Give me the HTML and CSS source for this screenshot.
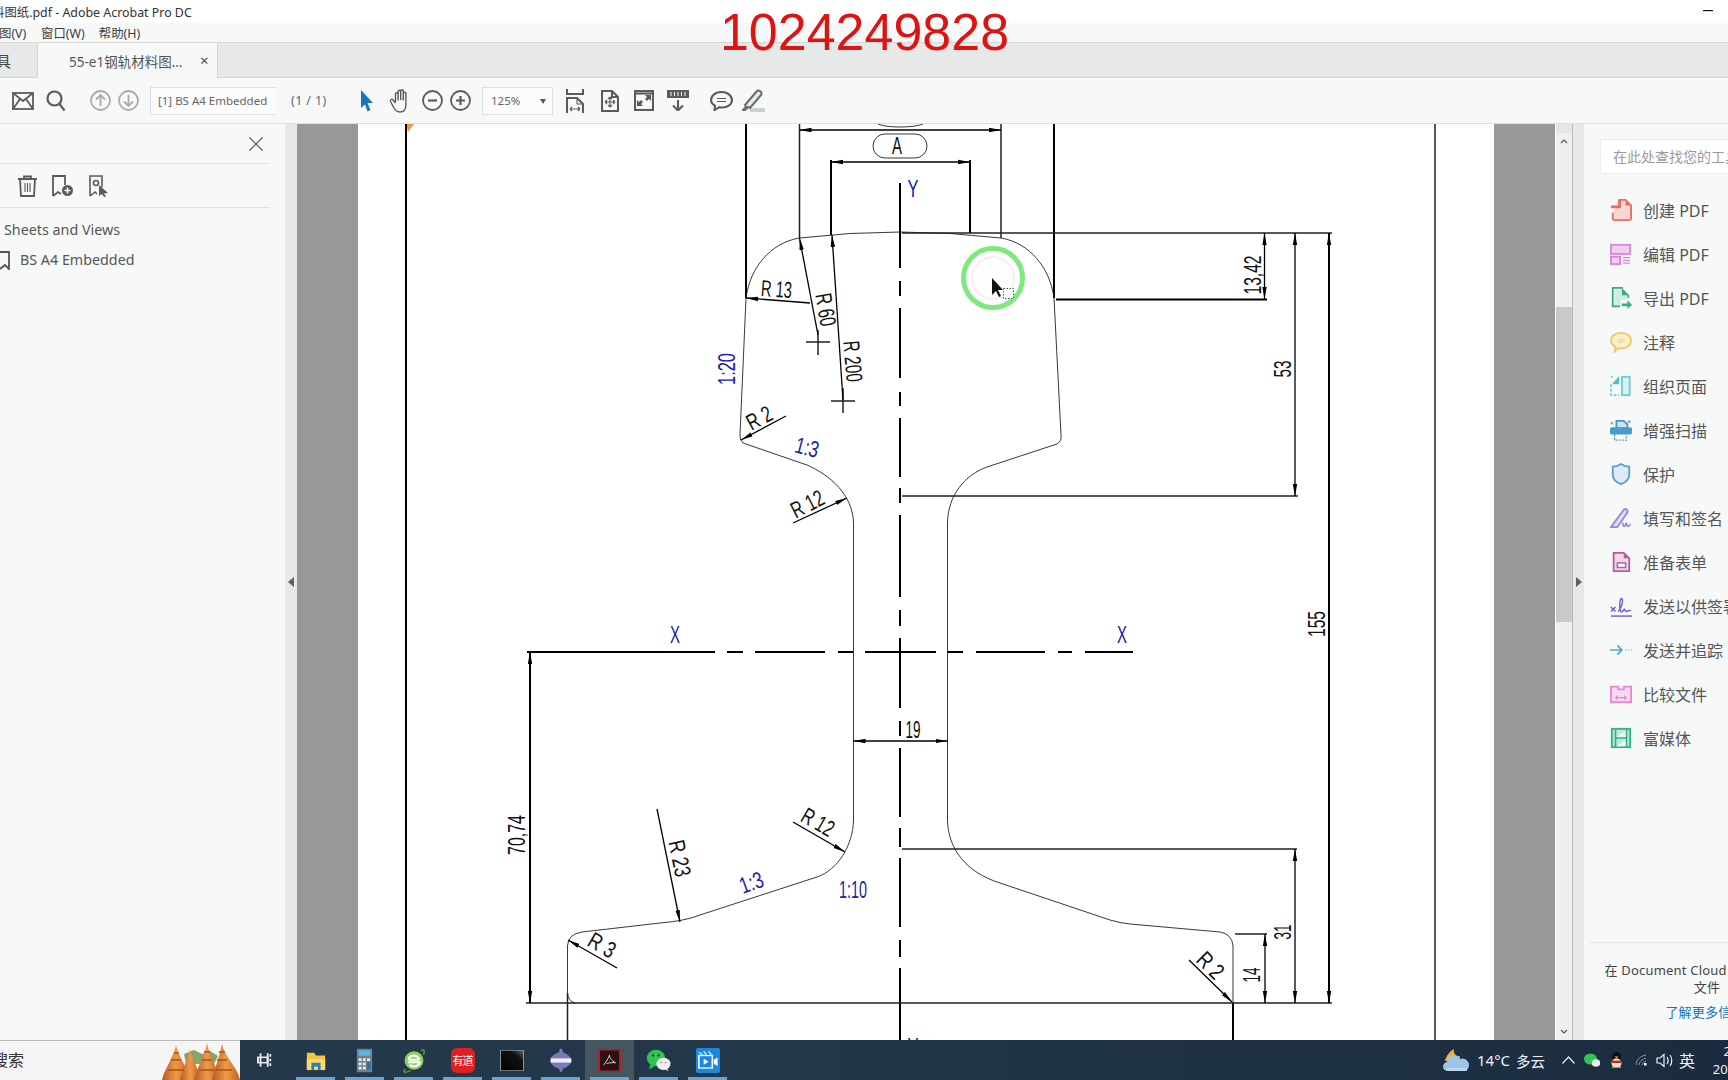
FILE: index.html
```html
<!DOCTYPE html>
<html lang="zh-CN">
<head>
<meta charset="utf-8">
<title>Adobe Acrobat Pro DC</title>
<link rel="stylesheet" href="styles.css">
</head>
<body>
<div class="app">
  <header class="titlebar">
    <span class="title-text">料图纸.pdf - Adobe Acrobat Pro DC</span>
    <svg class="win-min" width="10" height="2" viewBox="0 0 10 2"><rect width="10" height="1.2" fill="#111"/></svg>
    <div class="stamp">1024249828</div>
  </header>
  <nav class="menubar"><span class="menu-first">图(V)</span><span>窗口(W)</span><span>帮助(H)</span></nav>
  <div class="tabbar">
    <div class="tab-home"><span>具</span></div>
    <div class="tab-active"><span>55-e1钢轨材料图...</span><span class="tab-x">×</span></div>
  </div>
  <div class="toolbar">
    <svg class="ml12" width="22" height="18" viewBox="0 0 22 18"><g class="ic"><rect x="1" y="1" width="20" height="16"/><path d="M1 1l10 8 10-8M1 17l7-10M21 17l-7-10"/></g></svg>
    <svg class="ml12" width="20" height="22" viewBox="0 0 20 22"><g class="ic ic-b"><circle cx="8.5" cy="8.5" r="7"/><path d="M13.5 14l5 6.5"/></g></svg>
    <svg class="ml24" width="21" height="21" viewBox="0 0 21 21"><g class="ic ic-dis"><circle cx="10.5" cy="10.5" r="9.5"/><path d="M10.5 16V5M6 9.5l4.5-4.5 4.5 4.5"/></g></svg>
    <svg class="ml7" width="21" height="21" viewBox="0 0 21 21"><g class="ic ic-dis"><circle cx="10.5" cy="10.5" r="9.5"/><path d="M10.5 5v11M6 11.5l4.5 4.5 4.5-4.5"/></g></svg>
    <div class="page-field ml11">[1] BS A4 Embedded</div>
    <span class="page-count">(1 / 1)</span>
    <svg class="ml32" width="14" height="24" viewBox="0 0 14 24"><path d="M1 1l12 13-5.500 0 3 7-3 1.500-2.500-7L1 19z" fill="#1c75b9"/></svg>
    <svg class="ml15" width="23" height="25" viewBox="0 0 23 25"><g class="ic ic-h"><path d="M6.500 14V6a1.300 1.300 0 0 1 2.600 0v6.500M9.100 12V3.500a1.300 1.300 0 0 1 2.600 0V12M11.700 12V3a1.300 1.300 0 0 1 2.600 0v9.500M14.300 12.500V5.500a1.300 1.300 0 0 1 2.600 0V17c0 4.500-2.500 7-6 7-3.500 0-5-2-6.500-5L1.500 13.500c-.8-1.800 1.500-3 2.500-1.500l2.500 3"/></g></svg>
    <svg class="ml10" width="21" height="21" viewBox="0 0 21 21"><g class="ic"><circle cx="10.500" cy="10.500" r="9.500"/><path class="w2" d="M6 10.500h9"/></g></svg>
    <svg class="ml7" width="21" height="21" viewBox="0 0 21 21"><g class="ic"><circle cx="10.500" cy="10.500" r="9.500"/><path class="w2" d="M6 10.500h9M10.500 6v9"/></g></svg>
    <div class="zoom-box ml11"><span>125%</span><i class="caret"></i></div>
    <svg class="ml13" width="18" height="24" viewBox="0 0 18 24"><g class="ic ic-t"><path d="M1 0v5h16V0M1 24V9h10l6 6v9"/><path class="w1" d="M4 20h10M4 20l2-2M4 20l2 2M14 20l-2-2M14 20l-2 2M11 9v6h6"/></g></svg>
    <svg class="ml17" width="18" height="22" viewBox="0 0 18 22"><g class="ic ic-t"><path d="M1 1h10l6 6v14H1zM11 1v6h6"/><path class="w1" d="M9 7v10M4 12h10M9 7l-2 2M9 7l2 2M9 17l-2-2M9 17l2-2M4 12l2-2M4 12l2 2M14 12l-2-2M14 12l-2 2"/></g></svg>
    <svg class="ml15" width="20" height="21" viewBox="0 0 20 21"><g class="ic ic-t"><rect x="1" y="1" width="18" height="19"/><path d="M1 3.500h18"/></g><path d="M11 5h6v6l-2-2-2 2-2-2 2-2zM9 16H3v-6l2 2 2-2 2 2-2 2z" fill="#5a5c5a"/></svg>
    <svg class="ml13" width="22" height="21" viewBox="0 0 22 21"><rect width="22" height="8" fill="#5a5c5a"/><path d="M4 2v4M7.500 2v4M11 2v4M14.500 2v4M18 2v4" stroke="#f7f9f8"/><g class="ic ic-t"><path d="M11 10v10M6 15.500l5 5 5-5"/></g></svg>
    <svg class="ml21" width="23" height="20" viewBox="0 0 23 20"><g class="ic ic-t"><path d="M11.500 1c6 0 10.500 3.500 10.500 8s-4.500 7.500-9.500 7.500c-1 0-2 0-3-.3L4.500 19l.5-4.300C2.500 13.200 1 11.300 1 9c0-4.500 4.500-8 10.500-8z"/><path class="w1" d="M7 7.500h9M7 10.500h9"/></g></svg>
    <svg class="ml9" width="23" height="23" viewBox="0 0 23 23"><rect x="8" y="19" width="15" height="4" fill="#ccd0cc"/><path d="M1 21l3-3-1-2L15 2c2-2 6 2 4 4L8 19l-2-1-3 3z" fill="#e8eae8" stroke="#6a6c6a" stroke-width="2"/></svg>
  </div>

  <main class="workspace">
    <aside class="left-panel">
      <div class="left-head"><svg width="14" height="14" viewBox="0 0 14 14"><path d="M.5.5l13 13M13.500.5l-13 13" stroke="#555" stroke-width="1.200" fill="none"/></svg></div>
      <div class="left-tools">
        <svg width="21" height="22" viewBox="0 0 21 22"><g class="ic"><path d="M1 4h19M7 4V1.500h7V4M3 4l1 17h13l1-17"/><path class="w1" d="M8 8v9M10.500 8v9M13 8v9"/></g></svg>
        <svg width="23" height="22" viewBox="0 0 23 22"><g class="ic"><path d="M2 21V1h12v9M2 21l5-4 3 2"/></g><circle cx="16.500" cy="15.500" r="5.500" fill="#5a5c5a"/><path d="M13.500 15.500h6M16.500 12.500v6" stroke="#fff" stroke-width="1.500"/></svg>
        <svg width="21" height="22" viewBox="0 0 21 22"><g class="ic ic-n"><path d="M2 21V1h12v11M2 21l5-4 2 2"/><circle cx="8" cy="8" r="2.500"/></g><path d="M11 10l9 8-4 .500 2 3-2 .500-2-3-3 2z" fill="#5a5c5a"/></svg>
      </div>
      <div class="tree-row tree-a">Sheets and Views</div>
      <div class="tree-row tree-b"><svg width="10" height="19" viewBox="0 0 10 19"><path d="M0 1h9v17L5 14l-5 4" fill="none" stroke="#555" stroke-width="1.800"/></svg><span>BS A4 Embedded</span></div>
    </aside>
    <div class="splitter"><i class="tri-l"></i></div>

    <section class="viewer">
      <div class="page">
        <svg class="sheet" width="1136" height="916" viewBox="358 124 1136 916">
          <defs>
            <marker id="ar" markerUnits="userSpaceOnUse" markerWidth="13" markerHeight="7" refX="12" refY="3.500" orient="auto-start-reverse"><path d="M0 1.300L12 3.500 0 5.700z" fill="#000"/></marker>
          </defs>
          <path d="M406 124h8l-6 8z" fill="#f09a3c"/>
          <g class="thick">
            <path d="M406 124V1040M1329 233V1003M530 652V1003M746 124V298M1054 124V298M1056 299.500H1267M1233 1003V1040"/>
            <path d="M831 160V235M970 160V233"/>
            <path d="M900 183V268M900 281V296M900 308V378M900 392V406M900 418V477M900 488V503M900 515V597M900 610V626M900 638V708M900 721V736M900 748V817M900 828V847M900 858V927M900 940V957M900 968V1040"/>
            <path d="M527 652H715M727 652H743M755 652H825M838 652H853M865 652H936M947 652H963M976 652H1045M1058 652H1072M1085 652H1133"/>
          </g>
          <g class="mid">
            <path d="M902 233H1332M902 496H1298M902 849H1297M526 1003H1332M1235 934H1267"/>
          </g>
          <path class="thin" d="M799.500 238Q850 232 900 232Q950 232 1001 238C1030 243 1050 268 1054 298L1061 435Q1062 441 1057 444L987 467C965 475 948 495 947.500 523V820C948 848 965 872 1000 883L1110 920Q1120 923 1130 924L1220 932Q1232 934 1233 946V1003"/>
          <path class="thin" d="M799.500 238C770 243 750 268 746 298L740 435Q739.500 440 743 443L807 465C830 475 853 495 853.500 523V820C853 845 838 870 817 877L700 915Q685 921 660 923L582 932Q568 934 567.500 946V993Q568 1001 575 1003"/>
          <path class="mid" d="M567.500 993V1040M799.500 124V238M1001 124V238M1435 124V1040M818 330V355M806 342H830M843 388V413M831 401H855"/>
          <rect class="thin" x="873" y="134" width="54" height="24" rx="12"/>
          <path class="thin" d="M878 124Q885 127 900 127Q915 127 923 124"/>
          <g class="leader">
            <line x1="799.500" y1="130" x2="1001" y2="130" marker-start="url(#ar)" marker-end="url(#ar)"/>
            <line x1="831" y1="162" x2="970" y2="162" marker-start="url(#ar)" marker-end="url(#ar)"/>
            <line x1="853.500" y1="741" x2="947.500" y2="741" marker-start="url(#ar)" marker-end="url(#ar)"/>
            <line x1="1264.500" y1="233" x2="1264.500" y2="299" marker-start="url(#ar)" marker-end="url(#ar)"/>
            <line x1="1295" y1="233" x2="1295" y2="496" marker-start="url(#ar)" marker-end="url(#ar)"/>
            <line x1="1329" y1="233" x2="1329" y2="1003" marker-start="url(#ar)" marker-end="url(#ar)"/>
            <line x1="530" y1="652" x2="530" y2="1003" marker-start="url(#ar)" marker-end="url(#ar)"/>
            <line x1="1295" y1="849" x2="1295" y2="1003" marker-start="url(#ar)" marker-end="url(#ar)"/>
            <line x1="1265" y1="934" x2="1265" y2="1003" marker-start="url(#ar)" marker-end="url(#ar)"/>
            <line x1="810" y1="303" x2="746" y2="298" marker-end="url(#ar)"/>
            <line x1="818" y1="335" x2="799.500" y2="238" marker-end="url(#ar)"/>
            <line x1="843" y1="400" x2="832" y2="235" marker-end="url(#ar)"/>
            <line x1="786" y1="416" x2="741" y2="440" marker-end="url(#ar)"/>
            <line x1="793" y1="523" x2="847" y2="498" marker-end="url(#ar)"/>
            <line x1="657" y1="809" x2="680" y2="922" marker-end="url(#ar)"/>
            <line x1="793" y1="822" x2="845" y2="852" marker-end="url(#ar)"/>
            <line x1="617" y1="968" x2="568" y2="940" marker-end="url(#ar)"/>
            <line x1="1189" y1="960" x2="1232" y2="1002" marker-end="url(#ar)"/>
          </g>
          <g class="cad">
            <text transform="translate(897 154)" textLength="10" lengthAdjust="spacingAndGlyphs">A</text>
            <text transform="translate(913 738)" textLength="15" lengthAdjust="spacingAndGlyphs">19</text>
            <text transform="translate(1261 275) rotate(-90)" textLength="39" lengthAdjust="spacingAndGlyphs">13,42</text>
            <text transform="translate(1291 369) rotate(-90)" textLength="17" lengthAdjust="spacingAndGlyphs">53</text>
            <text transform="translate(1325 624) rotate(-90)" textLength="26" lengthAdjust="spacingAndGlyphs">155</text>
            <text transform="translate(1291 932) rotate(-90)" textLength="15" lengthAdjust="spacingAndGlyphs">31</text>
            <text transform="translate(1260 975) rotate(-90)" textLength="15" lengthAdjust="spacingAndGlyphs">14</text>
            <text transform="translate(525 835) rotate(-90)" textLength="40" lengthAdjust="spacingAndGlyphs">70,74</text>
            <text transform="translate(776 297) rotate(4)" textLength="31" lengthAdjust="spacingAndGlyphs">R 13</text>
            <text transform="translate(818 311) rotate(80)" textLength="33" lengthAdjust="spacingAndGlyphs">R 60</text>
            <text transform="translate(845 362) rotate(85)" textLength="41" lengthAdjust="spacingAndGlyphs">R 200</text>
            <text transform="translate(763 425) rotate(-28)" textLength="26" lengthAdjust="spacingAndGlyphs">R 2</text>
            <text transform="translate(811 511) rotate(-27)" textLength="34" lengthAdjust="spacingAndGlyphs">R 12</text>
            <text transform="translate(672 860) rotate(78)" textLength="37" lengthAdjust="spacingAndGlyphs">R 23</text>
            <text transform="translate(814 829) rotate(30)" textLength="34" lengthAdjust="spacingAndGlyphs">R 12</text>
            <text transform="translate(598 952) rotate(30)" textLength="28" lengthAdjust="spacingAndGlyphs">R 3</text>
            <text transform="translate(1205 971) rotate(45)" textLength="28" lengthAdjust="spacingAndGlyphs">R 2</text>
          </g>
          <g class="cad cad-blue">
            <text transform="translate(913 197)" textLength="11" lengthAdjust="spacingAndGlyphs">Y</text>
            <text transform="translate(675 643)" textLength="10" lengthAdjust="spacingAndGlyphs">X</text>
            <text transform="translate(1122 643)" textLength="10" lengthAdjust="spacingAndGlyphs">X</text>
            <text transform="translate(735 369) rotate(-90)" textLength="32" lengthAdjust="spacingAndGlyphs">1:20</text>
            <text transform="translate(805 455) rotate(15)" textLength="24" lengthAdjust="spacingAndGlyphs">1:3</text>
            <text transform="translate(754 890) rotate(-20)" textLength="24" lengthAdjust="spacingAndGlyphs">1:3</text>
            <text transform="translate(853 898)" textLength="28" lengthAdjust="spacingAndGlyphs">1:10</text>
            <text transform="translate(913 1055)" textLength="11" lengthAdjust="spacingAndGlyphs">Y</text>
          </g>
          <circle class="spot-in" cx="993" cy="278" r="21"/>
          <circle class="spot" cx="993" cy="278" r="29.500"/>
          <path d="M992 277l0 17 4-4 3 6 2-1-3-6 5 0z" fill="#111" transform="translate(0 1)"/>
          <rect class="drag" x="1003.500" y="288.500" width="10" height="10"/>
        </svg>
      </div>
    </section>

    <div class="scrollbar">
      <div class="sb-cap"></div>
      <div class="sb-track sb-top"><svg width="8" height="5" viewBox="0 0 8 5"><path d="M1 4l3-3 3 3" class="chev"/></svg></div>
      <div class="sb-thumb"></div>
      <div class="sb-track sb-bot"><svg width="8" height="5" viewBox="0 0 8 5"><path d="M1 1l3 3 3-3" class="chev"/></svg></div>
    </div>
    <div class="splitter splitter-r"><i class="tri-r"></i></div>

    <aside class="right-panel">
      <div class="right-inner">
        <div class="search-box">在此处查找您的工具</div>
        <ul class="tool-list">
          <li><svg viewBox="0 0 24 24"><path d="M9 1h8l6 6v14a2 2 0 0 1-2 2H5a2 2 0 0 1-2-2v-6" fill="#f6d7d3" stroke="#e2705f" stroke-width="2"/><path d="M9 1h3v9H1V7h8zM17 1v6h6" fill="#e2705f"/></svg><span>创建 PDF</span></li>
          <li><svg viewBox="0 0 24 24"><rect x="1" y="2" width="21" height="10" fill="#f3cdf0" stroke="#d58ad4" stroke-width="2"/><rect x="1" y="15" width="10" height="8" fill="#f3cdf0" stroke="#d58ad4" stroke-width="2"/><path d="M14 16h8M14 19h8M14 22h8" stroke="#d58ad4" stroke-width="1.500"/></svg><span>编辑 PDF</span></li>
          <li><svg viewBox="0 0 24 24"><path d="M14 1H3v20h8" fill="none" stroke="#3aa88a" stroke-width="2"/><path d="M5 3h8l6 6v5H12v6H5z" fill="#cfeee3"/><path d="M13 1l8 8v3h-2V9h-6z" fill="#3aa88a"/><path d="M13 18h6v-3.500l5 5-5 4.500v-3h-6z" fill="#3aa88a"/></svg><span>导出 PDF</span></li>
          <li><svg viewBox="0 0 24 24"><path d="M12 2c6 0 11 3.500 11 8.500S18 19 12 19c-1 0-2 0-3-.3L5 22.500l1-5.500C3 15.500 1 13.300 1 10.500 1 5.500 6 2 12 2z" fill="#fbeec8" stroke="#f0c96a" stroke-width="2"/><path d="M8 9.500h8M8 12h6" stroke="#f0d98e" stroke-width="1.500"/></svg><span>注释</span></li>
          <li><svg viewBox="0 0 24 24"><rect x="13" y="2" width="8.500" height="20" fill="#d5f1f4" stroke="#6fcbd6" stroke-width="2"/><path d="M1 10v12h9M1 2h2" fill="none" stroke="#6fcbd6" stroke-width="2" stroke-dasharray="3 2"/><path d="M10 1v9H2z" fill="#4fbecb"/></svg><span>组织页面</span></li>
          <li><svg viewBox="0 0 24 24"><path d="M7 9V2h8l4 4v4H7z" fill="#cfe3f2" stroke="#4c9ac9" stroke-width="2"/><rect x="0" y="9" width="24" height="8" rx="2" fill="#4c9ac9"/><path d="M5 17v6h13v-6" fill="none" stroke="#4c9ac9" stroke-width="1.500" stroke-dasharray="2 1.500"/><path d="M21 1v4M19 3h4M2 3v3M.5 4.500h3" stroke="#4c9ac9"/></svg><span>增强扫描</span></li>
          <li><svg viewBox="0 0 24 24"><path d="M12 1c3 2 6 3 9 3v9c0 5-4 8-9 10C7 21 3 18 3 13V4c3 0 6-1 9-3z" fill="#dceaf4" stroke="#5a9fcc" stroke-width="2"/></svg><span>保护</span></li>
          <li><svg viewBox="0 0 24 24"><path d="M1 22L15 3c2-2 5 0 4 3L8 22z" fill="#e2dbf7" stroke="#9a86dc" stroke-width="2"/><path d="M14 17c0 3 1 5 2 4s1-4 2-3 0 4 2 3 2-2 3-2" fill="none" stroke="#9a86dc" stroke-width="1.800"/></svg><span>填写和签名</span></li>
          <li><svg viewBox="0 0 24 24"><path d="M4 2h11l6 6v14H4z" fill="#f4d6ea" stroke="#b45da0" stroke-width="2"/><path d="M15 2v6h6z" fill="#b45da0"/><rect x="8" y="13" width="9" height="5" fill="#fff" stroke="#b45da0" stroke-width="1.600"/></svg><span>准备表单</span></li>
          <li><svg viewBox="0 0 24 24"><path d="M1 23h23" stroke="#8f80e0" stroke-width="2"/><path d="M1 13l5 5M6 13l-5 5" stroke="#6a5bd0" stroke-width="1.600"/><path d="M9 18c3-3 6-12 4-14s-3 8-2 12 3 2 4 0 1 2 3 2 2-2 5-1" fill="none" stroke="#6a5bd0" stroke-width="1.500"/></svg><span>发送以供签署</span></li>
          <li><svg viewBox="0 0 24 24"><path d="M0 12h13M8 7l5 5-5 5" fill="none" stroke="#50a8c8" stroke-width="1.800"/><path d="M17 12h8" stroke="#8fc4d8" stroke-width="1.500" stroke-dasharray="1.500 1.500"/></svg><span>发送并追踪</span></li>
          <li><svg viewBox="0 0 24 24"><path d="M1 4h8v3h6V4h8v17H1z" fill="#f9d9f0" stroke="#e58ad0" stroke-width="2"/><path d="M6 16h12M6 16l2.500-2M6 16l2.500 2M18 16l-2.500-2M18 16l-2.500 2" stroke="#e58ad0" stroke-width="1.500" fill="none"/></svg><span>比较文件</span></li>
          <li><svg viewBox="0 0 24 24"><rect x="2" y="2" width="20" height="20" fill="#bfe8d8" stroke="#35b08f" stroke-width="2"/><path d="M6 3v19M18 3v19M6 12h12" stroke="#35b08f" stroke-width="1.800"/><path d="M7 11l10-7v7zM7 21l10-7v7z" fill="#e9f7f1"/></svg><span>富媒体</span></li>
        </ul>
        <div class="cloud-note">
          <p>在 Document Cloud 中存储和共享</p>
          <p>文件</p>
          <a class="note-link">了解更多信息</a>
        </div>
      </div>
    </aside>
  </main>

  <footer class="taskbar">
    <div class="tb-search">
      <span>搜索</span>
      <svg class="tb-art" width="78" height="40" viewBox="0 0 78 40"><defs><linearGradient id="cone" x1="0" y1="0" x2="1" y2="0"><stop offset="0" stop-color="#b8591f"/><stop offset=".5" stop-color="#ee9a4a"/><stop offset="1" stop-color="#c4641f"/></linearGradient></defs><path d="M22 14l10-4 8 4 8-3 8 5-4 8H24z" fill="#8aa26a"/><path d="M14 5C12 16 2 30 0 40h28C26 28 16 16 14 5z" fill="url(#cone)"/><path d="M28 9C26 18 20 30 18 40h20C37 28 30 20 28 9z" fill="url(#cone)"/><path d="M45 3C43 16 34 30 32 40h26C56 28 47 16 45 3z" fill="url(#cone)"/><path d="M60 4C58 16 52 30 50 40h28C76 28 62 16 60 4z" fill="url(#cone)"/><path d="M9 20h10M12 13h5M40 20h10M42 12h6M55 20h10M57 12h6M6 30h16M37 30h16M54 30h16" stroke="#a9501a" stroke-width="1.500"/></svg>
    </div>
    <div class="tb-btn tb-view"><svg width="16" height="16" viewBox="0 0 18 24" preserveAspectRatio="none"><path d="M4 2v20M12 2v20M15 3v4M15 10v4M15 17v4" stroke="#e4e8ea" stroke-width="2"/><rect x="1" y="8" width="11" height="8" fill="none" stroke="#e4e8ea" stroke-width="2.400"/></svg></div>
    <div class="tb-btn tb-under tb-gap"><svg width="22" height="22" viewBox="0 0 24 24"><path d="M2 4h8l2 3h10v16H2z" fill="#f5c542"/><path d="M2 11h20v12H2z" fill="#fbd96a"/><path d="M7 23v-8h10v8h-3v-4h-4v4z" fill="#2a7fc0"/></svg></div>
    <div class="tb-btn tb-under"><svg width="17" height="25" viewBox="0 0 20 32" preserveAspectRatio="none"><rect x="1" y="1" width="18" height="30" fill="#6f7f8c"/><rect x="3" y="3" width="14" height="7" fill="#5ab5e0"/><path d="M3 13h3.500v3.500H3zM8 13h3.500v3.500H8zM13 13h3.500v3.500H13zM3 18.500h3.500V22H3zM8 18.500h3.500V22H8zM3 24h3.500v3.500H3zM8 24h3.500v3.500H8z" fill="#e4e8ea"/><rect x="13" y="18.500" width="4" height="9" fill="#2b6f9f"/></svg></div>
    <div class="tb-btn tb-under"><svg width="24" height="25" viewBox="0 0 28 30" preserveAspectRatio="none"><circle cx="14" cy="15" r="11" fill="#8fd060"/><path d="M8 14h12M8 14c0-6 10-7 12 0" fill="none" stroke="#fff" stroke-width="2.500"/><path d="M7 17h14c-1 5-9 7-12 3" fill="none" stroke="#fff" stroke-width="2.500"/><path d="M4 25C-1 30 5 30 10 27M22 3c4-2 5 0 3 5" fill="none" stroke="#5bb030" stroke-width="1.500"/></svg></div>
    <div class="tb-btn tb-under"><div class="yd">有道</div></div>
    <div class="tb-btn tb-under"><svg width="24" height="21" viewBox="0 0 24 29" preserveAspectRatio="none"><defs><linearGradient id="tg" x1="0" y1="1" x2="1" y2="0"><stop offset="0" stop-color="#000"/><stop offset=".7" stop-color="#111"/><stop offset="1" stop-color="#667"/></linearGradient></defs><rect x=".5" y=".5" width="23" height="28" fill="url(#tg)" stroke="#8a9498"/></svg></div>
    <div class="tb-btn tb-under"><svg width="22" height="25" viewBox="0 0 24 30" preserveAspectRatio="none"><path d="M10 5c0-6 4-6 4 0 8 3 10 9 10 10s-2 7-10 10c0 5-4 5-4 0C2 22 0 17 0 15S2 8 10 5z" fill="#7d78b8"/><rect x="1" y="12.500" width="22" height="5" fill="#f0f2f5"/></svg></div>
    <div class="tb-btn tb-under tb-active"><svg width="23" height="23" viewBox="0 0 23 30" preserveAspectRatio="none"><rect x="1" y="1" width="21" height="28" fill="#2a1214" stroke="#a8232a" stroke-width="2"/><path d="M11.500 8c-1 4-3 8-6 13M11.500 8c0 4 2 7 6 10-3-.5-6 0-9 1" fill="none" stroke="#f0e6e6" stroke-width="1"/></svg></div>
    <div class="tb-btn tb-under"><svg width="25" height="23" viewBox="0 0 30 28" preserveAspectRatio="none"><ellipse cx="12" cy="11" rx="11" ry="10" fill="#2fc552"/><path d="M5 19l-1 6 6-4z" fill="#2fc552"/><circle cx="8.500" cy="8" r="1.500" fill="#0f5a25"/><circle cx="15" cy="8" r="1.500" fill="#0f5a25"/><ellipse cx="21" cy="18" rx="8.500" ry="7.500" fill="#f0f0f0"/><path d="M25 23l2 4-5-3z" fill="#f0f0f0"/><circle cx="18.500" cy="16.500" r="1" fill="#888"/><circle cx="23.500" cy="16.500" r="1" fill="#888"/></svg></div>
    <div class="tb-btn tb-under"><svg width="24" height="25" viewBox="0 0 25 30" preserveAspectRatio="none"><rect width="25" height="30" rx="2" fill="#1c87e0"/><path d="M3 5l4 3M8 4l3 4M13 4l3 4" stroke="#cfe8fb" stroke-width="1.500"/><rect x="3" y="9" width="14" height="15" fill="none" stroke="#fff" stroke-width="1.600"/><path d="M8 13l5 3.500-5 3.500z" fill="#fff"/><path d="M18.500 14l4-2.500v10l-4-2.500z" fill="#fff"/></svg></div>

    <div class="tray">
      <svg width="26" height="24" viewBox="0 0 26 24"><path d="M11 1c-4 2-8 7-9 12h9c4 0 6-2 6-5-3 1-7-2-6-7z" fill="#f2b03a"/><path d="M5 23a4.500 4.500 0 0 1-1-9 7 7 0 0 1 13-3 6 6 0 0 1 5 12z" fill="#9cc4e8"/><path d="M3 20h21v2.500a1 1 0 0 1-1 .5H5z" fill="#bcd8f0"/></svg>
      <span class="t-temp">14°C</span>
      <span class="t-weather">多云</span>
      <svg class="t-up" width="13" height="8" viewBox="0 0 13 8"><path d="M.5 7.500l6-6.500 6 6.500" fill="none" stroke="#e6ebef" stroke-width="1.200"/></svg>
      <svg class="t-wx" width="16" height="14" viewBox="0 0 16 14"><ellipse cx="6.500" cy="6" rx="6.500" ry="5.500" fill="#2fc552"/><ellipse cx="12" cy="10" rx="4.200" ry="3.800" fill="#e8eaec"/></svg>
      <svg class="t-qq" width="13" height="16" viewBox="0 0 13 16"><ellipse cx="6.500" cy="5" rx="4.500" ry="5" fill="#111"/><ellipse cx="6.500" cy="11" rx="5" ry="4.500" fill="#f2f2f2"/><path d="M2 8.500h9v2.500H2z" fill="#d81e1e"/><path d="M4.500 4.500h4l-2 2z" fill="#f5b82e"/><path d="M2 15h3.500M7.500 15H11" stroke="#f5b82e" stroke-width="1.600"/></svg>
      <svg class="t-net" width="12" height="12" viewBox="0 0 12 12"><path d="M1 11C1 6 5 2 11 1M4 11c0-3 3-6 7-7M7 11c0-2 1.500-3 4-4" fill="none" stroke="#8d98a2" stroke-width="1"/><path d="M9 9h2.500v2.500H9z" fill="#fff"/></svg>
      <svg class="t-vol" width="17" height="15" viewBox="0 0 17 15"><path d="M1 5v5h3l4 3.500v-12L4 5z" fill="none" stroke="#eef1f3" stroke-width="1.200"/><path d="M11 4c1.300 2 1.300 5 0 7M14 2c2.300 3 2.300 8 0 11" fill="none" stroke="#eef1f3" stroke-width="1.200"/></svg>
      <span class="t-ime">英</span>
      <div class="t-clock"><span>21:18</span><span>2022/1/8</span></div>
    </div>
  </footer>
</div>
</body>
</html>
```

FILE: styles.css
```css
* { box-sizing: border-box; }
html, body { margin: 0; padding: 0; }
body { font-family: "Noto Sans", "Noto Sans CJK SC", sans-serif; color: #444; }
.app { width: 1728px; height: 1080px; display: flex; flex-direction: column; overflow: hidden; background: #f7f9f8; }

.ic { fill: none; stroke: #5a5c5a; stroke-width: 1.800; }
.ic-b { stroke-width: 2.200; }
.ic-n { stroke-width: 1.600; }
.ic-t { stroke-width: 2.100; }
.ic-h { stroke-width: 1.400; }
.ic-dis { stroke: #a9aba9; }
.w1 { stroke-width: 1.100; }
.w2 { stroke-width: 2.200; }
.ml7 { margin-left: 7px; } .ml9 { margin-left: 9px; } .ml10 { margin-left: 10px; } .ml11 { margin-left: 11px; } .ml12 { margin-left: 12px; }
.ml13 { margin-left: 13px; } .ml15 { margin-left: 15px; } .ml17 { margin-left: 17px; } .ml21 { margin-left: 21px; }
.ml24 { margin-left: 24px; } .ml32 { margin-left: 32px; }

.titlebar { height: 23px; flex: none; background: #fff; position: relative; display: flex; align-items: center; font-size: 12.400px; color: #333; }
.title-text { margin-left: -8px; white-space: nowrap; }
.win-min { position: absolute; left: 1703px; top: 10px; }
.stamp { position: absolute; left: 0; top: 2px; width: 1728px; text-align: center; padding-left: 1px; font-family: "Liberation Sans", sans-serif; font-size: 52px; line-height: 60px; color: #dc1414; z-index: 5; }

.menubar { height: 19px; flex: none; display: flex; align-items: center; font-size: 12.400px; color: #3d3d3d; gap: 14px; }
.menu-first { margin-left: -1px; width: 28px; white-space: nowrap; }

.tabbar { height: 36px; flex: none; display: flex; background: #e6e9e7; border-top: 1px solid #d6d8d6; border-bottom: 1px solid #d3d5d3; }
.tab-home { width: 37px; overflow: hidden; display: flex; align-items: center; font-size: 15px; color: #444; }
.tab-home span { margin-left: -4px; }
.tab-active { width: 181px; margin-bottom: -1px; background: #f7f9f8; border-left: 1px solid #d3d5d3; border-right: 1px solid #d3d5d3; display: flex; align-items: center; padding-left: 31px; font-size: 13.500px; color: #555; white-space: nowrap; position: relative; }
.tab-x { position: absolute; left: 162px; top: 8px; font-size: 15px; line-height: 18px; color: #444; }

.toolbar { height: 46px; flex: none; display: flex; align-items: center; background: #f7f9f8; border-bottom: 1px solid #dcdedc; }
.toolbar svg { flex: none; }
.page-field { width: 126px; height: 28px; flex: none; border: 1px solid #dfe1df; border-right: none; background: #fbfcfb; font-size: 11.500px; line-height: 26px; padding-left: 7px; color: #666; white-space: nowrap; }
.page-count { margin-left: 15px; width: 37px; font-size: 12.500px; letter-spacing: .4px; color: #666; white-space: nowrap; }
.zoom-box { width: 71px; height: 28px; flex: none; border: 1px solid #dfe1df; background: #fbfcfb; display: flex; align-items: center; font-size: 11.500px; color: #666; padding-left: 8px; position: relative; }
.caret { position: absolute; left: 57px; top: 11px; border: 3.500px solid transparent; border-top: 5px solid #555; border-bottom: none; }

.workspace { flex: 1; min-height: 0; display: flex; }

.left-panel { width: 285px; flex: none; background: #f7f9f8; display: flex; flex-direction: column; }
.left-head { height: 40px; width: 270px; flex: none; border-bottom: 1px solid #e0e2e0; display: flex; justify-content: flex-end; align-items: center; padding: 0 7px 0 0; }
.left-tools { height: 44px; width: 270px; flex: none; border-bottom: 1px solid #e0e2e0; display: flex; align-items: center; padding-left: 17px; gap: 13px; }
.left-tools svg:last-child { margin-left: 1px; }
.tree-row { font-size: 14.300px; color: #555; white-space: nowrap; }
.tree-a { margin: 12px 0 0 4px; line-height: 20px; }
.tree-b { margin-top: 10px; line-height: 20px; display: flex; align-items: center; gap: 10px; }

.splitter { width: 12px; flex: none; background: #e6e9e7; display: flex; align-items: center; justify-content: center; }
.splitter-r { width: 11px; }
.tri-l { border: 5px solid transparent; border-right: 6px solid #5d605e; border-left: none; }
.tri-r { border: 5px solid transparent; border-left: 6px solid #5d605e; border-right: none; }

.viewer { width: 1259px; flex: none; background: #979997; padding: 0 61px; border-right: 1px solid #fff; }
.page { width: 1136px; height: 100%; background: #fff; overflow: hidden; }
.sheet { display: block; }
.thick { fill: none; stroke: #000; stroke-width: 2; }
.mid { fill: none; stroke: #222; stroke-width: 1.500; }
.thin { fill: none; stroke: #222; stroke-width: .9; }
.leader { fill: none; stroke: #000; stroke-width: 1.300; }
.cad { font-family: "Liberation Sans", sans-serif; font-size: 23px; fill: #111; text-anchor: middle; }
.cad-blue { fill: #2020a8; }
.spot { fill: none; stroke: #7fe87f; stroke-width: 5; }
.spot-in { fill: #fefdfd; stroke: #fbeeee; stroke-width: 2; }
.drag { fill: #fff; stroke: #555; stroke-width: 1; stroke-dasharray: 1.500 1.500; }

.scrollbar { width: 17px; flex: none; background: #eef0ee; border-right: 1px solid #b9bbb9; display: flex; flex-direction: column; }
.sb-cap { height: 9px; flex: none; background: #e4e6e4; }
.sb-track { display: flex; justify-content: center; }
.sb-top { height: 174px; flex: none; padding-top: 6px; align-items: flex-start; }
.sb-thumb { height: 315px; flex: none; background: #c8cac8; }
.sb-bot { flex: 1; align-items: flex-end; padding-bottom: 6px; }
.chev { fill: none; stroke: #555; stroke-width: 1.200; }

.right-panel { width: 144px; flex: none; background: #f7f9f8; overflow: hidden; }
.right-inner { width: 240px; height: 100%; display: flex; flex-direction: column; }
.search-box { height: 35px; flex: none; margin: 15px 0 0 16px; background: #fff; border: 1px solid #eceeec; border-right: none; font-size: 14px; line-height: 33px; padding-left: 12px; color: #9a9a9a; white-space: nowrap; }
.tool-list { list-style: none; margin: 14px 0 0 0; padding: 0; flex: 1; }
.tool-list li { height: 44px; display: flex; align-items: center; padding-left: 25px; gap: 10px; font-size: 16px; color: #555; white-space: nowrap; }
.tool-list svg { flex: none; width: 22px; height: 22px; margin: 0 1px; }
.cloud-note { height: 98px; flex: none; margin-left: 6px; border-top: 1px solid #e2e4e2; padding-top: 19px; text-align: center; font-size: 13px; letter-spacing: .2px; line-height: 17px; color: #444; }
.cloud-note p { margin: 0; white-space: nowrap; }
.note-link { display: block; margin-top: 8px; margin-left: -4px; font-size: 13px; color: #1473b8; white-space: nowrap; }

.taskbar { height: 40px; flex: none; display: flex; align-items: stretch; background: linear-gradient(90deg, #24394a 0%, #22384a 45%, #1e3044 75%, #1b2c40 100%); color: #f0f3f5; }
.tb-search { width: 240px; flex: none; background: #f4f5f4; border-top: 1px solid #bbb; position: relative; overflow: hidden; font-size: 16px; line-height: 39px; color: #333; }
.tb-search span { margin-left: -8px; display: inline-block; }
.tb-art { position: absolute; right: 0; bottom: 0; }
.tb-btn { width: 49px; flex: none; display: flex; align-items: center; justify-content: center; position: relative; }
.tb-gap { margin-left: 2px; }
.tb-under::after { content: ""; position: absolute; left: 5px; right: 5px; bottom: 0; height: 3px; background: #6da3cc; }
.tb-active { background: #45565f; }
.yd { width: 24px; height: 25px; border-radius: 6px; background: #e02020; color: #fff; font-size: 11px; line-height: 25px; text-align: center; white-space: nowrap; letter-spacing: -1px; }

.tray { margin-left: 711px; flex: none; display: flex; align-items: center; white-space: nowrap; font-size: 15px; color: #eef1f3; }
.t-temp { margin-left: 8px; width: 39px; }
.t-weather { width: 34px; font-size: 14.500px; }
.t-up { margin-left: 12px; }
.t-wx { margin-left: 9px; }
.t-qq { margin-left: 10px; }
.t-net { margin-left: 12px; }
.t-vol { margin-left: 9px; }
.t-ime { margin-left: 6px; font-size: 16px; }
.t-clock { margin-left: 12px; width: 66px; display: flex; flex-direction: column; align-items: center; font-size: 13px; line-height: 18px; }
```
